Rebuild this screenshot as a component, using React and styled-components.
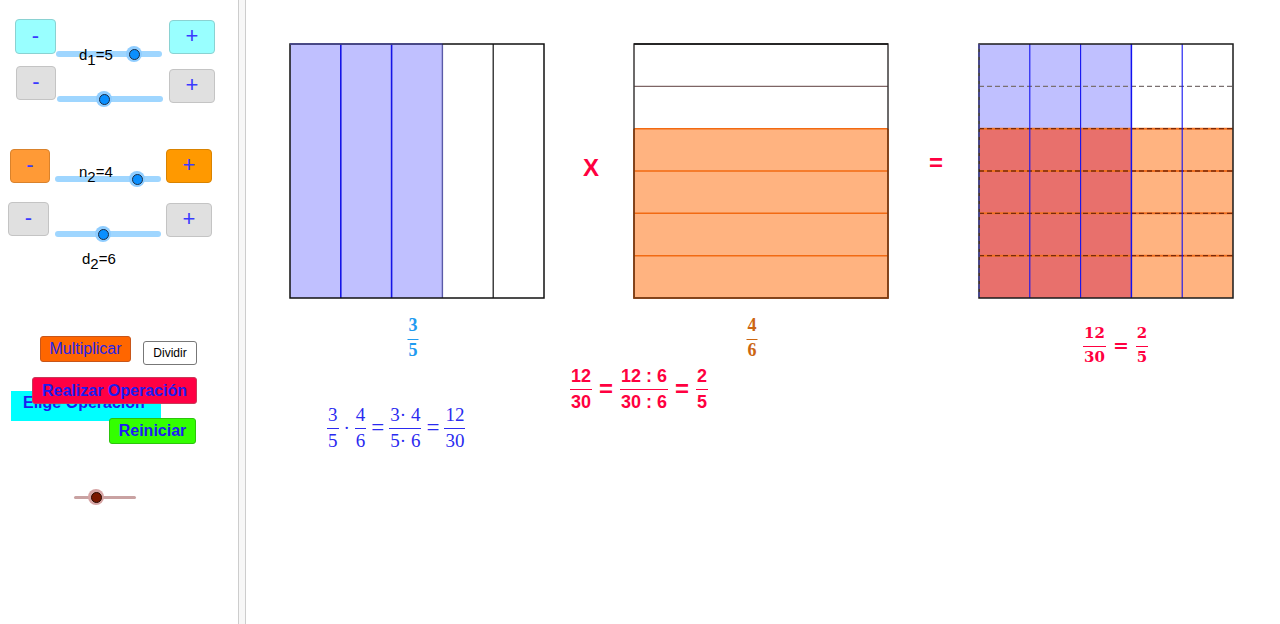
import React from 'react';
import styled, { createGlobalStyle } from 'styled-components';

const GlobalStyle = createGlobalStyle`
  html, body { margin: 0; padding: 0; background: #fff; overflow: hidden; }
  body { font-family: 'Liberation Sans', Arial, sans-serif; }
`;

const Applet = styled.div`
  display: flex;
  width: 1280px;
  height: 624px;
  background: #fff;
`;

/* both views are GeoGebra canvases: every object sits at its own coordinates */
const Algebra = styled.div`
  position: relative;
  flex: none;
  width: 238px;
  height: 100%;
`;

const Divider = styled.div`
  flex: none;
  width: 6px;
  height: 100%;
  background: #f7f7f7;
  border-left: 1px solid #cdcdcd;
  border-right: 1px solid #cdcdcd;
`;

const Graphics = styled.div`
  position: relative;
  flex: 1;
  height: 100%;
`;

const tones = {
  cyan: { bg: '#99ffff', border: '#8ad2d2' },
  gray: { bg: '#e0e0e0', border: '#c4c4c4' },
  amber: { bg: '#ff9a36', border: '#d9822c' },
  orange: { bg: '#ff9900', border: '#d98300' },
};

const StepButton = styled.button`
  position: absolute;
  left: ${p => p.$x}px;
  top: ${p => p.$y}px;
  width: ${p => p.$w}px;
  height: ${p => p.$h}px;
  box-sizing: border-box;
  display: flex;
  align-items: center;
  justify-content: center;
  padding: 0 0 2px;
  background: ${p => tones[p.$tone].bg};
  border: 1px solid ${p => tones[p.$tone].border};
  border-radius: 4px;
  color: #3a3aff;
  font: 22px/1 'Liberation Sans', Arial, sans-serif;
`;

const ActionButton = styled.button`
  position: absolute;
  left: ${p => p.$x}px;
  top: ${p => p.$y}px;
  width: ${p => p.$w}px;
  height: ${p => p.$h}px;
  box-sizing: border-box;
  display: flex;
  align-items: center;
  justify-content: center;
  padding: 0;
  background: ${p => p.$bg};
  border: 1px solid ${p => p.$border};
  border-radius: 3px;
  color: ${p => p.$color || '#1c1cf0'};
  font-family: 'Liberation Sans', Arial, sans-serif;
  font-size: ${p => p.$size || 16}px;
  font-weight: ${p => (p.$bold ? 700 : 400)};
  white-space: nowrap;
`;

const Caption = styled.div`
  position: absolute;
  left: 11px;
  top: 391px;
  width: 150px;
  height: 30px;
  box-sizing: border-box;
  padding: 4px 0 0 12px;
  background: #00ffff;
  color: #1c1cf0;
  font: 700 16px/1 'Liberation Sans', Arial, sans-serif;
  white-space: nowrap;
`;

const Track = styled.div`
  position: absolute;
  left: ${p => p.$x}px;
  top: ${p => p.$y - p.$t / 2}px;
  width: ${p => p.$w}px;
  height: ${p => p.$t}px;
  border-radius: ${p => p.$t / 2}px;
  background: ${p => p.$color};
`;

const Knob = styled.div`
  position: absolute;
  left: ${p => p.$x - 8}px;
  top: ${p => p.$y - 8}px;
  width: 16px;
  height: 16px;
  border-radius: 50%;
  background: ${p => p.$halo};
  &::after {
    content: '';
    position: absolute;
    left: 2.5px;
    top: 2.5px;
    width: 9px;
    height: 9px;
    border-radius: 50%;
    background: ${p => p.$fill};
    border: 1px solid ${p => p.$ring};
  }
`;

const sliderTones = {
  blue: { track: '#9fd6ff', halo: '#8fcdff', fill: '#0a8fff', ring: '#1b2c44', t: 6 },
  point: { track: '#c9a2a2', halo: '#d6a4a4', fill: '#7a1800', ring: '#2a0a00', t: 3 },
};

const Slider = ({ x, y, w, at, tone = 'blue' }) => {
  const s = sliderTones[tone];
  return (
    <>
      <Track $x={x} $y={y} $w={w} $t={s.t} $color={s.track} />
      <Knob $x={at} $y={y} $halo={s.halo} $fill={s.fill} $ring={s.ring} />
    </>
  );
};

const SliderLabel = styled.div`
  position: absolute;
  left: ${p => p.$x}px;
  top: ${p => p.$y}px;
  color: #000;
  font: 15px/1 'Liberation Sans', Arial, sans-serif;
  white-space: nowrap;
  sub {
    font-size: 15px;
    vertical-align: -5px;
    line-height: 0;
  }
`;

const Place = styled.div`
  position: absolute;
  left: ${p => p.$x}px;
  top: ${p => p.$y}px;
  line-height: 0;
`;

const Sign = styled.div`
  position: absolute;
  left: ${p => p.$x}px;
  top: ${p => p.$y}px;
  color: #ff0040;
  font: 700 24px/1 'Liberation Sans', Arial, sans-serif;
`;

const Formula = styled.div`
  position: absolute;
  left: ${p => p.$x}px;
  top: ${p => p.$y}px;
  display: flex;
  align-items: center;
  gap: ${p => p.$gap}px;
  color: ${p => p.$color};
  font-family: ${p => p.$family};
  font-size: ${p => p.$size}px;
  font-weight: ${p => p.$weight};
  line-height: 1;
  white-space: nowrap;
  --rule: ${p => p.$rule}px;
  --below: ${p => p.$below}px;
  --above: ${p => p.$above}px;
  ${p => p.$center && 'transform: translateX(-50%);'}
`;

const Frac = styled.span`
  display: inline-flex;
  flex-direction: column;
  align-items: stretch;
  text-align: center;
`;

const Num = styled.span`
  padding: 0 1px var(--below);
  border-bottom: var(--rule) solid currentColor;
`;

const Den = styled.span`
  padding: var(--above) 1px 0;
`;

const Op = styled.span`
  font-size: ${p => (p.$size ? `${p.$size}px` : 'inherit')};
  line-height: 1;
`;

const F = ({ n, d }) => (
  <Frac>
    <Num>{n}</Num>
    <Den>{d}</Den>
  </Frac>
);

const serif = "'Liberation Serif', 'Times New Roman', serif";
const sans = "'Liberation Sans', Arial, sans-serif";
const dejavu = "'DejaVu Serif', serif";

const S = 254;
const col = S / 5;
const row = S / 6;

const ThirdsOfFive = () => (
  <svg width="257" height="257" viewBox="0 0 257 257">
    <rect x="1" y="1" width={col * 3} height={S} fill="#c0c0ff" />
    {[1, 2].map(k => (
      <line key={k} x1={1 + col * k} y1="1" x2={1 + col * k} y2={1 + S} stroke="#1515e6" strokeWidth="1.6" />
    ))}
    <line x1={1 + col * 3} y1="1" x2={1 + col * 3} y2={1 + S} stroke="#5a5aa8" strokeWidth="1.4" />
    <line x1={1 + col * 4} y1="1" x2={1 + col * 4} y2={1 + S} stroke="#111" strokeWidth="1.2" />
    <rect x="1" y="1" width={S} height={S} fill="none" stroke="#111" strokeWidth="1.5" />
    <line x1="1" y1="1" x2={1 + col * 3} y2="1" stroke="#4b4b9a" strokeWidth="1.5" />
  </svg>
);

const FourSixths = () => (
  <svg width="257" height="257" viewBox="0 0 257 257">
    <rect x="1" y={1 + row * 2} width={S} height={row * 4} fill="#ffb380" />
    <line x1="1" y1={1 + row} x2={1 + S} y2={1 + row} stroke="#7d6464" strokeWidth="1.2" />
    {[2, 3, 4, 5].map(k => (
      <line key={k} x1="1" y1={1 + row * k} x2={1 + S} y2={1 + row * k} stroke="#f26a12" strokeWidth="1.5" />
    ))}
    <rect x="1" y="1" width={S} height={S} fill="none" stroke="#3d3a3a" strokeWidth="1.5" />
    <line x1="1" y1="1" x2={1 + S} y2="1" stroke="#111" strokeWidth="1.5" />
    <polyline
      points={`1,${1 + row * 2} 1,${1 + S} ${1 + S},${1 + S} ${1 + S},${1 + row * 2}`}
      fill="none"
      stroke="#8a3b08"
      strokeWidth="1.5"
    />
  </svg>
);

const Product = () => (
  <svg width="257" height="257" viewBox="0 0 257 257">
    <rect x="1" y="1" width={col * 3} height={row * 2} fill="#c0c0ff" />
    <rect x="1" y={1 + row * 2} width={col * 3} height={row * 4} fill="#e8706c" />
    <rect x={1 + col * 3} y={1 + row * 2} width={col * 2} height={row * 4} fill="#ffb380" />
    <line x1="1" y1={1 + row} x2={1 + S} y2={1 + row} stroke="#7a7070" strokeWidth="1.3" strokeDasharray="5 3" />
    {[2, 3, 4, 5].map(k => (
      <g key={k}>
        <line x1="1" y1={1 + row * k} x2={1 + S} y2={1 + row * k} stroke="#f07020" strokeWidth="2" />
        <line x1="1" y1={1 + row * k} x2={1 + S} y2={1 + row * k} stroke="#7a2a0a" strokeWidth="1.3" strokeDasharray="5 3" />
      </g>
    ))}
    {[1, 2, 3, 4].map(k => (
      <line key={k} x1={1 + col * k} y1="1" x2={1 + col * k} y2={1 + S} stroke="#1212f0" strokeWidth={k === 3 ? 1.5 : 1.1} />
    ))}
    <rect x="1" y="1" width={S} height={S} fill="none" stroke="#1a1a1a" strokeWidth="1.5" />
    <line x1="1" y1="1" x2="1" y2={1 + S} stroke="#4a4aa0" strokeWidth="1.5" strokeDasharray="5 3" />
  </svg>
);

export default function App() {
  return (
    <>
      <GlobalStyle />
      <Applet>
        <Algebra>
          <Slider x={56} y={54} w={106} at={134} />
          <SliderLabel $x={79} $y={47}>d<sub>1</sub>=5</SliderLabel>
          <StepButton $tone="cyan" $x={15} $y={19} $w={41} $h={35}>-</StepButton>
          <StepButton $tone="cyan" $x={169} $y={20} $w={46} $h={34}>+</StepButton>

          <Slider x={57} y={99} w={106} at={104} />
          <StepButton $tone="gray" $x={16} $y={66} $w={40} $h={34}>-</StepButton>
          <StepButton $tone="gray" $x={169} $y={69} $w={46} $h={34}>+</StepButton>

          <Slider x={55} y={179} w={106} at={137} />
          <SliderLabel $x={79} $y={164}>n<sub>2</sub>=4</SliderLabel>
          <StepButton $tone="amber" $x={10} $y={149} $w={40} $h={34}>-</StepButton>
          <StepButton $tone="orange" $x={166} $y={149} $w={46} $h={34}>+</StepButton>

          <Slider x={55} y={234} w={106} at={103} />
          <SliderLabel $x={82} $y={251}>d<sub>2</sub>=6</SliderLabel>
          <StepButton $tone="gray" $x={8} $y={202} $w={41} $h={34}>-</StepButton>
          <StepButton $tone="gray" $x={166} $y={203} $w={46} $h={34}>+</StepButton>

          <ActionButton $x={40} $y={336} $w={91} $h={26} $bg="#ff6600" $border="#c8561a" $color="#2424e8">
            Multiplicar
          </ActionButton>
          <ActionButton $x={143} $y={341} $w={54} $h={24} $bg="#ffffff" $border="#777777" $color="#000" $size={12}>
            Dividir
          </ActionButton>
          <Caption>Elige Operación</Caption>
          <ActionButton $x={32} $y={377} $w={165} $h={27} $bg="#ff0044" $border="#c83a58" $bold>
            Realizar Operación
          </ActionButton>
          <ActionButton $x={109} $y={418} $w={87} $h={26} $bg="#33ff00" $border="#2cc40c" $bold>
            Reiniciar
          </ActionButton>

          <Slider x={74} y={497} w={62} at={96} tone="point" />
        </Algebra>

        <Divider />

        <Graphics>
          <Place $x={43} $y={43}><ThirdsOfFive /></Place>
          <Place $x={387} $y={43}><FourSixths /></Place>
          <Place $x={732} $y={43}><Product /></Place>

          <Sign $x={337} $y={156}>X</Sign>
          <Sign $x={683} $y={151}>=</Sign>

          <Formula $x={167} $y={316} $center $gap={0} $color="#1f9bf0" $family={serif} $size={18} $weight={700} $rule={1} $below={5} $above={1}>
            <F n="3" d="5" />
          </Formula>
          <Formula $x={506} $y={316} $center $gap={0} $color="#cc6611" $family={serif} $size={18} $weight={700} $rule={1} $below={5} $above={1}>
            <F n="4" d="6" />
          </Formula>

          <Formula $x={324} $y={367} $gap={7} $color="#ff0040" $family={sans} $size={18} $weight={700} $rule={1.5} $below={4} $above={2.5}>
            <F n="12" d="30" />
            <Op $size={24}>=</Op>
            <F n="12 : 6" d="30 : 6" />
            <Op $size={24}>=</Op>
            <F n="2" d="5" />
          </Formula>

          <Formula $x={81} $y={405} $gap={5} $color="#2a2af0" $family={serif} $size={19} $weight={400} $rule={1} $below={4} $above={2}>
            <F n="3" d="5" />
            <Op>·</Op>
            <F n="4" d="6" />
            <Op $size={23}>=</Op>
            <F n="3· 4" d="5· 6" />
            <Op $size={23}>=</Op>
            <F n="12" d="30" />
          </Formula>

          <Formula $x={837} $y={326} $gap={7} $color="#ff0040" $family={dejavu} $size={15} $weight={700} $rule={1.3} $below={4.5} $above={3}>
            <F n="12" d="30" />
            <Op $size={19}>=</Op>
            <F n="2" d="5" />
          </Formula>
        </Graphics>
      </Applet>
    </>
  );
}
